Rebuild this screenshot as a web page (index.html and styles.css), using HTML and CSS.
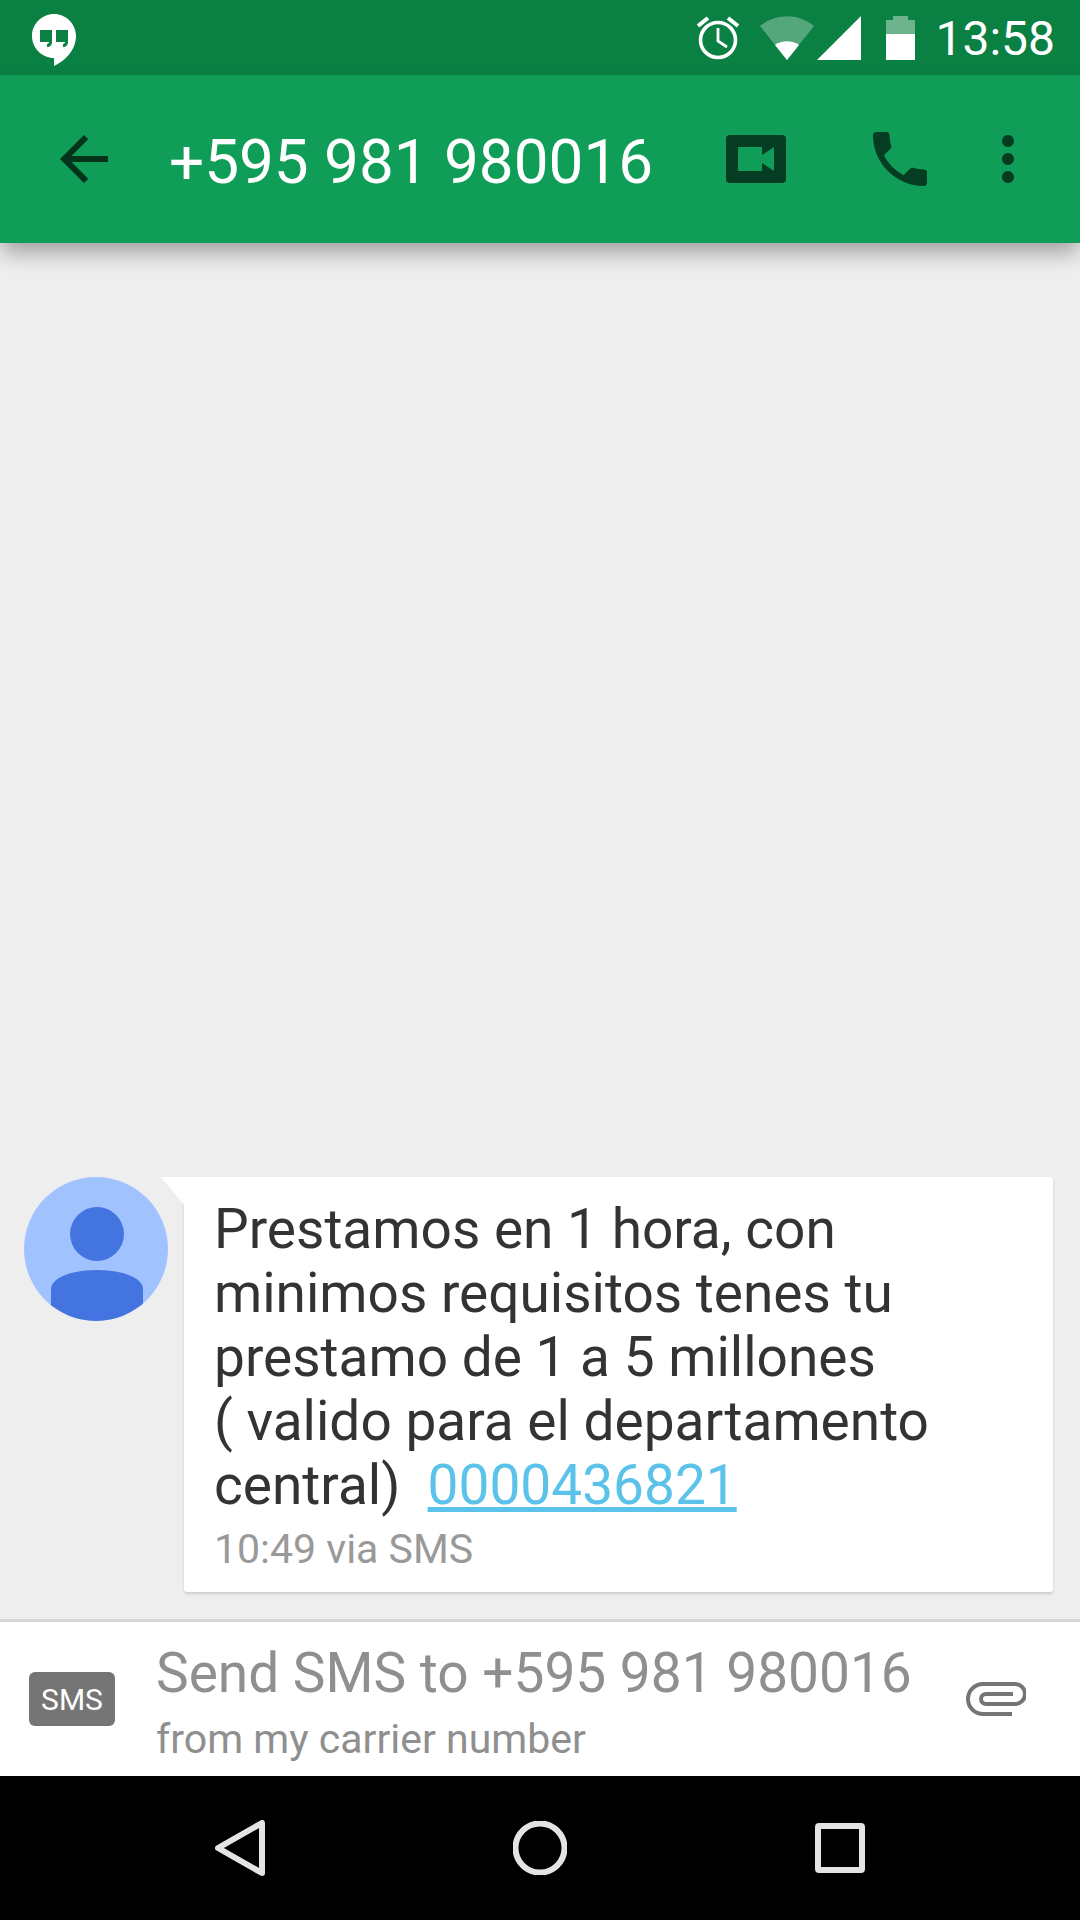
FILE: index.html
```html
<!DOCTYPE html>
<html lang="en">
<head>
    <meta charset="UTF-8">
    <meta name="viewport" content="width=device-width, initial-scale=1.0">
    <title>Hangouts SMS</title>
    <link rel="stylesheet" href="styles.css">
</head>
<body>
    <div class="status-bar">
        <svg class="hangouts" viewBox="0 0 44 52">
            <path fill="#fff" d="M22 0C10 0 0 10 0 22s10 22 22 22v8c11-5 22-16 22-30C44 10 34 0 22 0z"/>
            <path fill="#0b8043" d="M8 16h12v12c0 3-2 5-5 5v-3c1 0 2-1 2-2H8zM24 16h12v12c0 3-2 5-5 5v-3c1 0 2-1 2-2h-9z"/>
        </svg>
        <div class="status-icons">
            <svg class="alarm" viewBox="0 0 42 44">
                <circle cx="21" cy="24" r="17.5" fill="none" stroke="#fff" stroke-width="3.6"/>
                <path fill="none" stroke="#fff" stroke-width="2.8" d="M21 12v13l9 6"/>
                <path fill="none" stroke="#fff" stroke-width="4" d="M1 10l10-8M41 10L31 2"/>
            </svg>
            <svg class="wifi" viewBox="0 0 54 44">
                <path fill="#fff" fill-opacity=".3" d="M0 10C16-3 38-3 54 10L27 44z"/>
                <path fill="#fff" d="M15 29c7-5 17-5 24 0L27 44z"/>
            </svg>
            <svg class="signal" viewBox="0 0 44 44">
                <path fill="#fff" d="M44 0v44H0z"/>
            </svg>
            <svg class="battery" viewBox="0 0 29 44">
                <path fill="#fff" fill-opacity=".4" d="M7 0h15v4h7v14H0V4h7z"/>
                <path fill="#fff" d="M0 18h29v26H0z"/>
            </svg>
            <span class="clock">13:58</span>
        </div>
    </div>

    <div class="toolbar">
        <svg class="icon back" viewBox="0 0 24 24"><path d="M20 11H7.83l5.59-5.59L12 4l-8 8 8 8 1.41-1.41L7.83 13H20v-2z"/></svg>
        <span class="title">+595 981 980016</span>
        <div class="actions">
            <svg class="video" viewBox="0 0 60 48">
                <path fill-rule="evenodd" d="M4 0h52a4 4 0 0 1 4 4v40a4 4 0 0 1-4 4H4a4 4 0 0 1-4-4V4a4 4 0 0 1 4-4zM12 12v24h24v-8l12 8V12l-12 8v-8z"/>
            </svg>
            <svg class="icon call" viewBox="0 0 24 24"><path d="M6.62 10.79c1.44 2.83 3.76 5.14 6.59 6.59l2.2-2.2c.27-.27.67-.36 1.02-.24 1.12.37 2.33.57 3.57.57.55 0 1 .45 1 1V20c0 .55-.45 1-1 1-9.39 0-17-7.61-17-17 0-.55.45-1 1-1h3.5c.55 0 1 .45 1 1 0 1.25.2 2.45.57 3.57.11.35.03.74-.25 1.02l-2.2 2.2z"/></svg>
            <svg class="icon more" viewBox="0 0 24 24"><path d="M12 8c1.1 0 2-.9 2-2s-.9-2-2-2-2 .9-2 2 .9 2 2 2zm0 2c-1.1 0-2 .9-2 2s.9 2 2 2 2-.9 2-2-.9-2-2-2zm0 6c-1.1 0-2 .9-2 2s.9 2 2 2 2-.9 2-2-.9-2-2-2z"/></svg>
        </div>
    </div>

    <div class="thread">
        <div class="message">
            <svg class="avatar" viewBox="0 0 144 144">
                <defs><clipPath id="avatar-clip"><circle cx="72" cy="72" r="72"/></clipPath></defs>
                <circle cx="72" cy="72" r="72" fill="#a0c3ff"/>
                <g clip-path="url(#avatar-clip)" fill="#4374e0">
                    <circle cx="73" cy="57" r="27"/>
                    <path d="M27 144v-32c0-11 20-19 46-19s46 8 46 19v32z"/>
                </g>
            </svg>
            <div class="bubble">
                <p class="bubble-text">Prestamos en 1 hora, con minimos requisitos tenes tu prestamo de 1 a 5 millones<br>( valido para el departamento central)&nbsp; <a class="bubble-link" href="#">0000436821</a></p>
                <p class="bubble-meta">10:49 via SMS</p>
            </div>
        </div>
    </div>

    <div class="composer">
        <span class="sms-badge">SMS</span>
        <div class="composer-text">
            <div class="composer-main">Send SMS to +595 981 980016</div>
            <div class="composer-sub">from my carrier number</div>
        </div>
        <svg class="clip" viewBox="0 0 60 34">
            <path d="M46 32H17A15 15 0 0 1 17 2H49A10 10 0 0 1 49 22H20A5 5 0 0 1 20 12H47"/>
        </svg>
    </div>

    <div class="nav-bar">
        <div class="nav-slot">
            <svg class="nav-back" viewBox="0 0 50 56"><path d="M47 3v50L3 28z"/></svg>
        </div>
        <div class="nav-slot">
            <svg class="nav-home" viewBox="0 0 54 54"><circle cx="27" cy="27" r="24.5"/></svg>
        </div>
        <div class="nav-slot">
            <svg class="nav-recents" viewBox="0 0 50 50"><rect x="3" y="3" width="44" height="44" rx="1"/></svg>
        </div>
    </div>
</body>
</html>
```

FILE: styles.css
```css
* {
    box-sizing: border-box;
}

body {
    margin: 0;
    width: 1080px;
    height: 1920px;
    display: flex;
    flex-direction: column;
    background-color: #eeeeee;
    font-family: Roboto, "Liberation Sans", sans-serif;
    overflow: hidden;
}

/* Status bar */
.status-bar {
    height: 75px;
    flex: none;
    display: flex;
    align-items: center;
    justify-content: space-between;
    padding: 0 25px 0 32px;
    background-color: #0b8043;
}

.hangouts {
    width: 44px;
    height: 52px;
    margin-top: 4px;
}

.status-icons {
    display: flex;
    align-items: center;
}

.alarm {
    width: 42px;
    height: 44px;
}

.wifi {
    width: 54px;
    height: 44px;
    margin-left: 21px;
}

.signal {
    width: 44px;
    height: 44px;
    margin-left: 3px;
}

.battery {
    width: 29px;
    height: 44px;
    margin-left: 25px;
}

.clock {
    margin-left: 20px;
    margin-top: 2px;
    color: #fff;
    font-size: 48px;
    line-height: 44px;
}

/* Toolbar */
.toolbar {
    height: 168px;
    flex: none;
    display: flex;
    align-items: center;
    padding-left: 48px;
    padding-right: 36px;
    background-color: #0f9d58;
    box-shadow: 0 12px 20px -2px rgba(0, 0, 0, 0.32);
    position: relative;
    z-index: 1;
}

.toolbar svg {
    fill: #053d22;
}

.icon {
    width: 72px;
    height: 72px;
    flex: none;
}

.toolbar .back {
    fill: #04331c;
}

.title {
    margin-left: 49px;
    margin-top: 4px;
    color: #fff;
    font-size: 62px;
}

.actions {
    margin-left: auto;
    display: flex;
    align-items: center;
}

.video {
    width: 60px;
    height: 48px;
    margin-right: 78px;
}

.call {
    margin-right: 36px;
}

/* Message thread */
.thread {
    flex: 1;
    display: flex;
    flex-direction: column;
    justify-content: flex-end;
    padding: 0 27px 27px 24px;
}

.message {
    display: flex;
    align-items: flex-start;
    gap: 16px;
}

.avatar {
    width: 144px;
    height: 144px;
    flex: none;
}

.bubble {
    flex: 1;
    position: relative;
    padding: 20px 30px 21px 30px;
    background-color: #fff;
    border-radius: 0 3px 3px 3px;
    box-shadow: 0 2px 3px rgba(0, 0, 0, 0.14);
}

/* little tail on the top left corner */
.bubble::before {
    content: "";
    position: absolute;
    top: 0;
    left: -23px;
    width: 23px;
    height: 28px;
    background: linear-gradient(to top right, #dcdcdc, #fff 30%);
    clip-path: polygon(0 0, 100% 0, 100% 100%);
}

.bubble-text {
    margin: 0;
    color: #333333;
    font-size: 55px;
    line-height: 64px;
}

.bubble-link {
    color: #5bc2ea;
}

.bubble-meta {
    margin: 10px 0 0;
    color: #999999;
    font-size: 41px;
    line-height: 44px;
}

/* Composer */
.composer {
    height: 157px;
    flex: none;
    display: flex;
    align-items: center;
    padding: 0 54px 0 29px;
    background-color: #fff;
    border-top: 3px solid #d6d6d6;
}

.sms-badge {
    width: 86px;
    height: 54px;
    flex: none;
    display: flex;
    align-items: center;
    justify-content: center;
    border-radius: 6px;
    background-color: #757575;
    color: #fff;
    font-size: 30px;
}

.composer-text {
    margin-left: 41px;
    padding-top: 5px;
    flex: 1;
}

.composer-main {
    color: #8f8f8f;
    font-size: 55px;
    line-height: 62px;
}

.composer-sub {
    margin-top: 13px;
    color: #8f8f8f;
    font-size: 41px;
    line-height: 44px;
}

.clip {
    width: 60px;
    height: 34px;
    flex: none;
    fill: none;
    stroke: #757575;
    stroke-width: 4;
}

/* Navigation bar */
.nav-bar {
    height: 144px;
    flex: none;
    display: grid;
    grid-template-columns: repeat(3, 300px);
    justify-content: center;
    align-items: center;
    background-color: #000;
}

.nav-slot {
    display: flex;
    justify-content: center;
}

.nav-bar svg {
    fill: none;
    stroke: #e4e4e4;
    stroke-width: 6;
    stroke-linejoin: round;
}

.nav-back {
    width: 50px;
    height: 56px;
}

.nav-home {
    width: 54px;
    height: 54px;
}

.nav-recents {
    width: 50px;
    height: 50px;
}
```
